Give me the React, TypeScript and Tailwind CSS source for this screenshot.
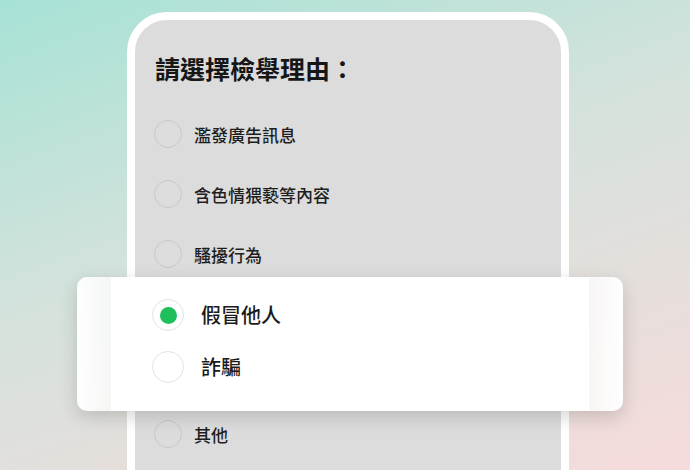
const REASONS = ['濫發廣告訊息', '含色情猥褻等內容', '騷擾行為', '', '', '其他'];

const FONT = { fontFamily: '"Noto Sans CJK TC", "Noto Sans", sans-serif' };

function GrayOption({ label }: { label: string }) {
  if (!label) return <div className="h-[60px]" />;
  return (
    <div className="flex h-[60px] items-center gap-3">
      <span className="h-[28px] w-[28px] shrink-0 rounded-full border border-[#c8c8c8]" />
      <span className="text-[17px] font-medium leading-none text-[#1e1e1e]">{label}</span>
    </div>
  );
}

function ModalOption({ label, checked }: { label: string; checked?: boolean }) {
  return (
    <div className="flex h-[52px] items-center gap-[17px]">
      <span className="flex h-[32px] w-[32px] shrink-0 items-center justify-center rounded-full border-[1.5px] border-[#e3e3e3] bg-white">
        {checked && <span className="h-[17px] w-[17px] rounded-full bg-[#1fbf5b]" />}
      </span>
      <span className="text-[20px] font-medium leading-none text-[#1b1b1b]">{label}</span>
    </div>
  );
}

export default function App() {
  return (
    <div
      className="relative h-[470px] w-[690px] overflow-hidden bg-[linear-gradient(160deg,#a7e2d6_0%,#d5e2dc_45%,#f6dbdb_100%)]"
      style={FONT}
    >
      {/* phone */}
      <div className="ml-[127px] mt-[12px] h-[520px] w-[442px] rounded-[40px] border-[8px] border-white bg-[#dcdcdc] pl-[19px] pt-[30px]">
        <h1 className="h-[36px] pl-[1px] text-[25px] font-bold leading-[36px] text-[#161616]">請選擇檢舉理由：</h1>
        <div className="mt-[18px]">
          {REASONS.map((r, i) => (
            <GrayOption key={i} label={r} />
          ))}
        </div>
      </div>

      {/* magnified selection */}
      <div className="absolute left-[77px] top-[277px] flex h-[134px] w-[546px] overflow-hidden rounded-[10px] shadow-[0_6px_18px_rgba(0,0,0,0.16)]">
        <div className="w-[34px] bg-[linear-gradient(90deg,rgba(255,255,255,0.97),rgba(255,255,255,0.72))]" />
        <div className="flex-1 bg-white pl-[41px] pt-[12px]">
          <ModalOption label="假冒他人" checked />
          <ModalOption label="詐騙" />
        </div>
        <div className="w-[34px] bg-[linear-gradient(90deg,rgba(255,255,255,0.72),rgba(255,255,255,0.97))]" />
      </div>
    </div>
  );
}
